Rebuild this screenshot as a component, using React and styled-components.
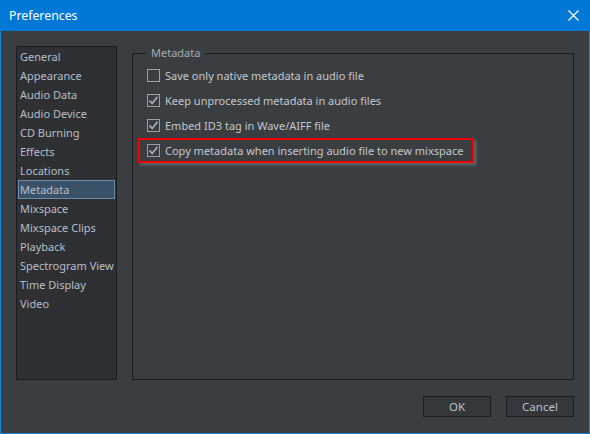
import React from 'react';
import styled, { createGlobalStyle } from 'styled-components';

const GlobalStyle = createGlobalStyle`
  html, body {
    margin: 0;
    padding: 0;
    background: #3b3e41;
  }
  body {
    font-family: 'Noto Sans', 'Open Sans', sans-serif;
    font-size: 11px;
  }
`;

const categories = [
  'General',
  'Appearance',
  'Audio Data',
  'Audio Device',
  'CD Burning',
  'Effects',
  'Locations',
  'Metadata',
  'Mixspace',
  'Mixspace Clips',
  'Playback',
  'Spectrogram View',
  'Time Display',
  'Video',
];

const options = [
  { label: 'Save only native metadata in audio file', checked: false },
  { label: 'Keep unprocessed metadata in audio files', checked: true },
  { label: 'Embed ID3 tag in Wave/AIFF file', checked: true },
  { label: 'Copy metadata when inserting audio file to new mixspace', checked: true, highlight: true },
];

function CheckBox({ checked }) {
  return (
    <Box>
      {checked && (
        <svg width='11' height='11' viewBox='0 0 11 11'>
          <polyline points='1.5,5.5 4.2,8.5 9.5,1.8' fill='none' stroke='#a9b0b7' strokeWidth='1.7' />
        </svg>
      )}
    </Box>
  );
}

export default function App() {
  return (
    <Window>
      <GlobalStyle />
      <TitleBar>
        <span>Preferences</span>
        <svg width='11' height='11' viewBox='0 0 11 11'>
          <path d='M0.5 0.5 L10.5 10.5 M10.5 0.5 L0.5 10.5' stroke='#fff' strokeWidth='1.2' />
        </svg>
      </TitleBar>
      <Body>
        <Panes>
          <List>
            {categories.map((c) => (
              <Item key={c} selected={c === 'Metadata'}>
                {c}
              </Item>
            ))}
          </List>
          <Group>
            <Legend>Metadata</Legend>
            <Options>
              {options.map((o) => (
                <Option key={o.label} highlight={o.highlight}>
                  <CheckBox checked={o.checked} />
                  <span>{o.label}</span>
                </Option>
              ))}
            </Options>
          </Group>
        </Panes>
        <Footer>
          <Button>OK</Button>
          <Button>Cancel</Button>
        </Footer>
      </Body>
    </Window>
  );
}

const Window = styled.div`
  width: 590px;
  height: 434px;
  box-sizing: border-box;
  border: 1px solid #1883d7;
  border-top: none;
  display: flex;
  flex-direction: column;
  background: #3b3e41;
`;

const TitleBar = styled.div`
  height: 31px;
  margin: 0 -1px;
  background: #0078d7;
  display: flex;
  align-items: center;
  justify-content: space-between;
  padding: 0 11px 0 9px;
  color: #fff;
  font-size: 12.3px;

  span {
    margin-top: -1px;
  }
`;

const Body = styled.div`
  flex: 1;
  display: flex;
  flex-direction: column;
  padding: 15px 15px 16px 15px;
`;

const Panes = styled.div`
  display: flex;
  gap: 15px;
  height: 334px;
`;

const List = styled.div`
  width: 101px;
  box-sizing: border-box;
  border: 1px solid #1b1c1e;
  background: #2f3033;
  padding: 0 1px;
`;

const Item = styled.div`
  height: 19px;
  box-sizing: border-box;
  line-height: 17px;
  padding-left: 1px;
  color: #b4bfcb;
  white-space: nowrap;
  border: 1px solid ${(p) => (p.selected ? '#6d8cab' : 'transparent')};
  background: ${(p) => (p.selected ? '#3b5168' : 'transparent')};
`;

const Group = styled.fieldset`
  flex: 1;
  margin: 0;
  padding: 0;
  border: 1px solid #1b1c1e;
  min-width: 0;
`;

const Legend = styled.legend`
  margin-left: 13px;
  padding: 0 5px;
  color: #a3abb3;
  line-height: 14px;
`;

const Options = styled.div`
  display: flex;
  flex-direction: column;
  align-items: flex-start;
  padding: 3px 0 0 14px;
`;

const Option = styled.div`
  height: 25px;
  box-sizing: border-box;
  display: flex;
  align-items: center;
  gap: 5px;
  color: #c1c8cf;
  white-space: nowrap;
  ${(p) =>
    p.highlight &&
    `
    margin-left: -9px;
    padding: 0 9px 0 7px;
    border: 2px solid #f00000;
    box-shadow: 2px 2px 3px rgba(110, 112, 115, 0.9);
  `}
`;

const Box = styled.div`
  width: 13px;
  height: 13px;
  box-sizing: border-box;
  border: 1px solid #9ba0a5;
  display: flex;
  align-items: center;
  justify-content: center;
`;

const Footer = styled.div`
  margin-top: auto;
  display: flex;
  justify-content: flex-end;
  gap: 15px;
`;

const Button = styled.button`
  width: 68px;
  height: 21px;
  box-sizing: border-box;
  background: #35383b;
  border: 1px solid #1c1d1f;
  color: #b8c2cc;
  font-family: inherit;
  font-size: 11.5px;
  padding: 0;
`;
